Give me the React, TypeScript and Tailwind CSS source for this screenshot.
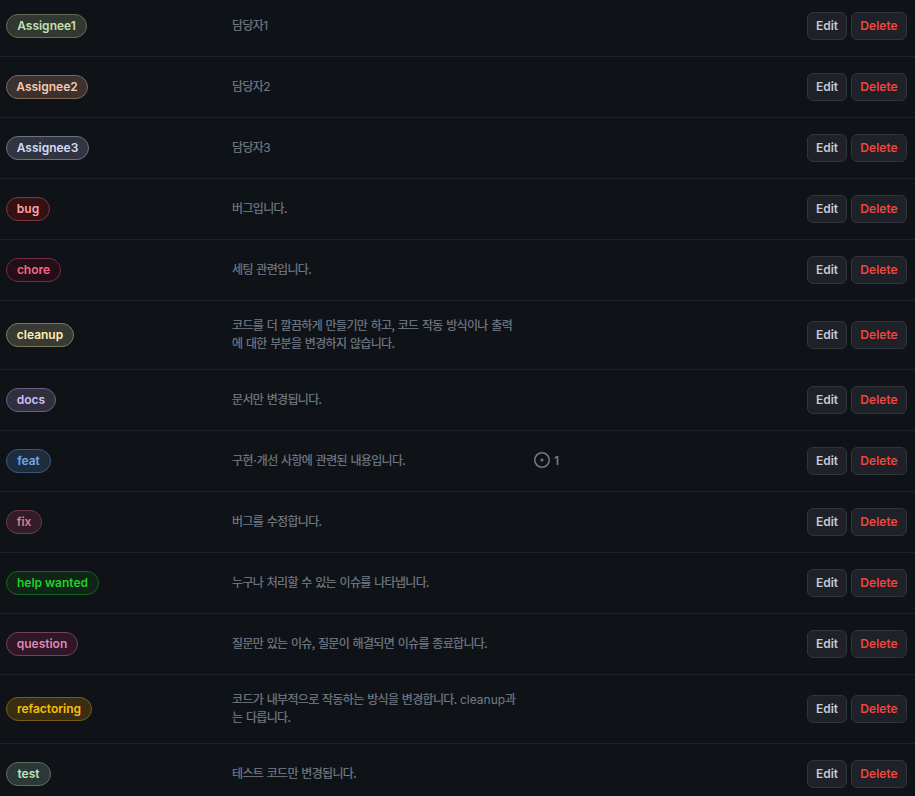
import React from "react";

type Label = {
  name: string;
  pill: string;
  lines: React.ReactNode[];
  issues?: number;
  row?: string;
};

const labels: Label[] = [
  { name: "Assignee1", pill: "w-[81px] bg-[#30382f] border-[#5d7057] text-[#c2e0b4]", lines: [<>담당자<Latin>1</Latin></>], row: "h-[57px] pb-1" },
  { name: "Assignee2", pill: "w-[82px] bg-[#3b3230] border-[#836858] text-[#fac9ab]", lines: [<>담당자<Latin>2</Latin></>] },
  { name: "Assignee3", pill: "w-[83px] bg-[#31353f] border-[#697282] text-[#d3dcfa]", lines: [<>담당자<Latin>3</Latin></>] },
  { name: "bug", pill: "w-[44px] bg-[#341115] border-[#7a3a3d] text-[#ffa2a6]", lines: ["버그입니다."] },
  { name: "chore", pill: "w-[55px] bg-[#240f19] border-[#712d42] text-[#f26785]", lines: ["세팅 관련입니다."] },
  {
    name: "cleanup",
    pill: "w-[68px] bg-[#393a33] border-[#7d795e] text-[#fdf0b5]",
    lines: ["코드를 더 깔끔하게 만들기만 하고, 코드 작동 방식이나 출력", "에 대한 부분을 변경하지 않습니다."],
    row: "h-[69px]",
  },
  { name: "docs", pill: "w-[50px] bg-[#312f3e] border-[#67607f] text-[#cfbff8]", lines: ["문서만 변경됩니다."] },
  {
    name: "feat",
    pill: "w-[45px] bg-[#1f2c3d] border-[#3a5777] text-[#6ea8e5]",
    lines: [
      <>
        구현<span className="-ml-px tracking-[-1.7px]">·</span>개선 사항에 관련된 내용입니다.
      </>,
    ],
    issues: 1,
  },
  { name: "fix", pill: "w-[36px] bg-[#321c25] border-[#703b49] text-[#da7d91]", lines: ["버그를 수정합니다."] },
  { name: "help wanted", pill: "w-[93px] bg-[#102417] border-[#15661f] text-[#1fd02a]", lines: ["누구나 처리할 수 있는 이슈를 나타냅니다."] },
  { name: "question", pill: "w-[72px] bg-[#2f1728] border-[#743f60] text-[#df86b5]", lines: ["질문만 있는 이슈, 질문이 해결되면 이슈를 종료합니다."] },
  {
    name: "refactoring",
    pill: "w-[86px] bg-[#392e15] border-[#7b5c10] text-[#fbbd08]",
    lines: [
      <>
        코드가 내부적으로 작동하는 방식을 변경합니다. <Latin>cleanup</Latin>과
      </>,
      "는 다릅니다.",
    ],
    row: "h-[69px]",
  },
  { name: "test", pill: "w-[45px] bg-[#2d3735] border-[#5a6f64] text-[#bfe5bf]", lines: ["테스트 코드만 변경됩니다."] },
];

function Latin({ children }: { children: React.ReactNode }) {
  return <span className="font-['Inter',sans-serif] tracking-normal [-webkit-text-stroke:0px]">{children}</span>;
}

function IssueIcon() {
  return (
    <svg width="16" height="16" viewBox="0 0 16 16" fill="currentColor" className="shrink-0">
      <path d="M8 9.5a1.5 1.5 0 1 0 0-3 1.5 1.5 0 0 0 0 3Z" />
      <path d="M8 0a8 8 0 1 1 0 16A8 8 0 0 1 8 0ZM1.5 8a6.5 6.5 0 1 0 13 0 6.5 6.5 0 0 0-13 0Z" />
    </svg>
  );
}

function Row({ label }: { label: Label }) {
  return (
    <div className={`flex shrink-0 items-center border-b border-[#1e2227] pl-1.5 pr-2 ${label.row ?? "h-[61px]"}`}>
      <div className="w-[226px] shrink-0">
        <div className={`flex h-6 items-center justify-center whitespace-nowrap rounded-full border text-xs font-semibold ${label.pill}`}>
          {label.name}
        </div>
      </div>
      <div className="w-[302px] shrink-0 whitespace-nowrap pb-0.5 font-['Noto_Sans_CJK_KR',sans-serif] text-xs leading-[18px] tracking-[-0.66px] text-[#747c87] [word-spacing:1.5px] [-webkit-text-stroke:0.2px]">
        {label.lines.map((line, i) => (
          <div key={i} className="h-[18px]">{line}</div>
        ))}
      </div>
      <div className="flex flex-1 items-center gap-1 text-xs font-semibold text-[#747c87]">
        {label.issues !== undefined && (
          <>
            <span className="pb-0.5"><IssueIcon /></span>
            <span>{label.issues}</span>
          </>
        )}
      </div>
      <div className="flex gap-1 text-xs font-semibold">
        <button className="h-7 w-10 rounded-md border border-[#30343b] bg-[#1e2128] text-[#c4cbd4]">Edit</button>
        <button className="h-7 w-14 rounded-md border border-[#30343b] bg-[#1e2128] font-medium tracking-[0.1px] text-[#f5483f] [-webkit-text-stroke:0.15px]">Delete</button>
      </div>
    </div>
  );
}

export default function App() {
  return (
    <div className="flex h-[796px] w-[915px] flex-col overflow-hidden bg-[#0f1217] font-['Inter','Noto_Sans_CJK_KR',sans-serif]">
      {labels.map((label) => (
        <Row key={label.name} label={label} />
      ))}
    </div>
  );
}
